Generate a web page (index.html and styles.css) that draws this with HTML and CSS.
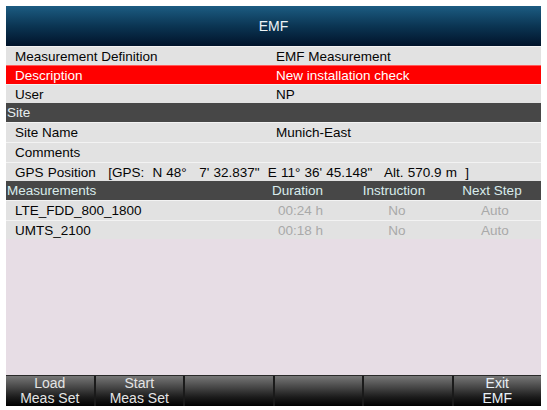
FILE: index.html
```html
<!DOCTYPE html>
<html>
<head>
<meta charset="utf-8">
<link rel="stylesheet" href="styles.css">
</head>
<body>
<div class="panel">
  <div class="title">EMF</div>
  <div class="row"><span class="label">Measurement Definition</span><span class="value">EMF Measurement</span></div>
  <div class="row selected"><span class="label">Description</span><span class="value">New installation check</span></div>
  <div class="row"><span class="label">User</span><span class="value">NP</span></div>
  <div class="section">Site</div>
  <div class="row tall"><span class="label">Site Name</span><span class="value">Munich-East</span></div>
  <div class="row tall"><span class="label">Comments</span><span class="value"></span></div>
  <div class="row"><span class="gps">GPS Position   [GPS:  N 48°   7' 32.837"  E 11° 36' 45.148"   Alt. 570.9 m  ]</span></div>
  <div class="section grid">
    <span>Measurements</span><span class="c">Duration</span><span class="c">Instruction</span><span class="c">Next Step</span>
  </div>
  <div class="row grid tall">
    <span class="name">LTE_FDD_800_1800</span><span class="c dim">00:24 h</span><span class="c dim">No</span><span class="c dim">Auto</span>
  </div>
  <div class="row grid">
    <span class="name">UMTS_2100</span><span class="c dim">00:18 h</span><span class="c dim">No</span><span class="c dim">Auto</span>
  </div>
  <div class="empty"></div>
  <div class="softkeys">
    <div class="key">Load<br>Meas Set</div>
    <div class="key">Start<br>Meas Set</div>
    <div class="key"></div>
    <div class="key"></div>
    <div class="key"></div>
    <div class="key exit">Exit<br>EMF</div>
  </div>
</div>
</body>
</html>
```

FILE: styles.css
```css
html, body {
  margin: 0;
  padding: 0;
  background: #ffffff;
}
body {
  font-family: "Liberation Sans", Arial, sans-serif;
  font-size: 13.5px;
  color: #050505;
}
.panel {
  margin: 6px 0 0 6px;
  width: 535px;
  height: 400px;
  display: flex;
  flex-direction: column;
  background: #e7dde5;
}
.title {
  height: 40px;
  flex: none;
  display: flex;
  align-items: center;
  justify-content: center;
  color: #eef3f6;
  font-size: 14px;
  background: linear-gradient(to bottom, #1c5c82 0%, #0b3553 50%, #01132a 100%);
}
.row {
  height: 19px;
  flex: none;
  display: flex;
  align-items: center;
  background: #e2e2e2;
  border-top: 1px solid #f3f3f3;
  box-sizing: border-box;
}
.row.tall {
  height: 20px;
}
.row.selected {
  background: #ff0000;
  border-top-color: #ff5a5a;
  color: #ffffff;
}
.label {
  width: 270px;
  padding-left: 9px;
  box-sizing: border-box;
}
.value {
  flex: 1;
}
.gps {
  padding-left: 9px;
  white-space: pre;
  word-spacing: 0.4px;
}
.section {
  height: 19px;
  flex: none;
  display: flex;
  align-items: center;
  background: #474747;
  color: #e6eef0;
  padding-left: 1px;
  box-sizing: border-box;
}
.grid {
  display: grid;
  grid-template-columns: 244px 95px 98px 98px;
  align-items: center;
}
.section.grid {
  padding-left: 0;
  color: #d9ecec;
}
.section.grid > span:first-child {
  padding-left: 1px;
}
.c {
  text-align: center;
}
.name {
  padding-left: 9px;
}
.dim {
  color: #a9a9a9;
  padding-left: 6px;
}
.empty {
  flex: 1;
  background: #e7dde5;
}
.softkeys {
  height: 31px;
  flex: none;
  display: grid;
  grid-template-columns: repeat(6, 1fr);
  gap: 2px;
  background: #1a1a1a;
  border-top: 1px solid #2a2a2a;
  box-sizing: border-box;
}
.key {
  background: linear-gradient(to bottom, #777777 0%, #4a4a4a 35%, #1c1c1c 70%, #000000 100%);
  color: #e4e4e4;
  text-align: center;
  font-size: 14px;
  line-height: 15px;
}
.key.exit {
  color: #e8f0f6;
}
```
